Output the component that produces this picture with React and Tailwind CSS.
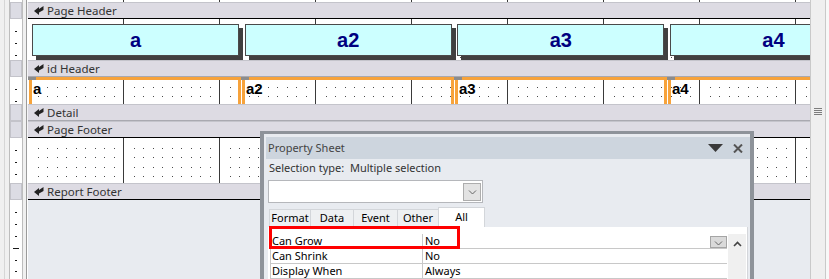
import React from "react";

const UI = "font-['Noto_Sans','Segoe_UI',sans-serif]";
const ARIAL = "font-['Liberation_Sans',Arial,sans-serif]";

const DOT_X = [10, 19, 29, 38, 48, 57, 67, 76, 86];
const DOT_Y = [10, 19, 29, 38, 48, 58, 67, 77, 86];

// dotted design grid with a solid line every inch (96px)
function GridFill({ id }) {
  return (
    <svg className="absolute inset-0 h-full w-full" aria-hidden="true">
      <defs>
        <pattern id={id} width="96" height="96" patternUnits="userSpaceOnUse">
          {DOT_X.map((x) =>
            DOT_Y.map((y) => (
              <rect key={x + "-" + y} x={x} y={y} width="1" height="1" fill="#4a4a4a" />
            ))
          )}
          <rect x="95" y="0" width="1" height="96" fill="#3a3a3a" />
        </pattern>
      </defs>
      <rect width="100%" height="100%" fill={`url(#${id})`} />
    </svg>
  );
}

function Ticks({ count }) {
  return (
    <svg className="h-full w-full" aria-hidden="true">
      {Array.from({ length: count }, (_, i) => {
        const k = i + 1;
        const long = k % 4 === 0;
        return (
          <rect
            key={k}
            x={long ? 3 : 5}
            y={Math.round(11.9 * k)}
            width={long ? 6 : 2}
            height="1"
            fill="#1a1a1a"
          />
        );
      })}
    </svg>
  );
}

function Gutter({ bar, ticks = 0 }) {
  return (
    <div className="flex h-full w-[28px] shrink-0">
      <div className="w-[4px] bg-[#f0f0f0]" />
      <div className="w-[1px] bg-[#d6d6d6]" />
      <div className="w-[4px] bg-[#f0f0f0]" />
      <div className="w-[1px] bg-[#bdbdbd]" />
      {bar ? (
        <div className="w-[12px] border border-[#c3c3ca] bg-[#dcdce4]" />
      ) : (
        <div className="w-[12px] bg-white">
          <Ticks count={ticks} />
        </div>
      )}
      <div className="w-[1px] bg-[#bdbdbd]" />
      <div className="w-[3px] bg-[#f0f0f0]" />
      <div className="w-[1px] bg-[#9b9b9b]" />
      <div className={`w-[1px] ${bar ? "bg-[#f4f4f6]" : "bg-white"}`} />
    </div>
  );
}

function BarIcon() {
  return (
    <svg width="10" height="9" viewBox="0 0 10 9" aria-hidden="true">
      <path d="M0 5 L5 1 L5 3 L9.5 0 L9.5 4 L5 6.5 L5 9 Z" fill="#222" />
    </svg>
  );
}

function SectionBar({ label, line = "border-b-[#a9a9b0]" }) {
  return (
    <div className="flex h-[17px] shrink-0">
      <Gutter bar />
      <div
        className={`flex flex-1 items-center gap-[3px] border-y border-t-[#c4c4cb] bg-[#dddbe3] pl-[6px] text-[11.5px] text-[#333] ${line}`}
      >
        <BarIcon />
        <span className="leading-none">{label}</span>
      </div>
    </div>
  );
}

function Body({ id, h, ticks, children }) {
  return (
    <div className={`flex shrink-0 ${h}`}>
      <Gutter ticks={ticks} />
      <div className="relative flex-1 overflow-hidden bg-white">
        <GridFill id={id} />
        <div className="relative h-full">{children}</div>
      </div>
    </div>
  );
}

const labels = ["a", "a2", "a3", "a4"];

function Chevron({ up, className }) {
  return (
    <svg width="9" height="6" viewBox="0 0 9 6" className={className} aria-hidden="true">
      <path
        d={up ? "M1 5 L4.5 1.5 L8 5" : "M1 1.5 L4.5 5 L8 1.5"}
        fill="none"
        stroke={up ? "#444" : "#666"}
        strokeWidth={up ? 1.6 : 1}
      />
    </svg>
  );
}

const tabs = [
  ["Format", "w-[41px]"],
  ["Data", "w-[43px]"],
  ["Event", "w-[44px]"],
  ["Other", "w-[41px]"],
];

const props = [
  ["Can Grow", "No", true],
  ["Can Shrink", "No"],
  ["Display When", "Always"],
];

function PropertySheet() {
  return (
    <div
      className={`absolute left-[260px] top-[131px] h-[160px] w-[494px] border-x-[4px] border-t-[3px] border-[#8e939a] bg-[#e8ebf0] pt-[3px] ${UI}`}
    >
      <div className="ml-[2px] flex h-[22px] items-center bg-[#cdd5de] pl-[2px] pr-[7px] text-[11px] text-[#444]">
        <span className="flex-1">Property Sheet</span>
        <svg width="15" height="8" viewBox="0 0 15 8" aria-hidden="true">
          <path d="M0 0 H15 L7.5 8 Z" fill="#3a3a3a" />
        </svg>
        <svg width="10" height="9" viewBox="0 0 10 9" className="ml-[10px]" aria-hidden="true">
          <path d="M1 0.5 L9 8.5 M9 0.5 L1 8.5" stroke="#555" strokeWidth="2" />
        </svg>
      </div>
      <div className="pl-[4px] pr-[3px]">
        <div className="h-[18px] pl-[1px] text-[11px] leading-[18px] text-[#333]">
          Selection type:&nbsp; Multiple selection
        </div>
        <div className="mt-[3px] flex h-[23px] w-[215px] items-center justify-end border border-[#b5b7bb] bg-white pr-[1px]">
          <div className="flex h-[18px] w-[18px] items-center justify-center border border-[#adadad] bg-[#e3e3e3]">
            <Chevron />
          </div>
        </div>
        <div className="mt-[1px] flex h-[23px] items-end pl-[1px] text-[11px] text-black">
          {tabs.map(([t, w]) => (
            <div
              key={t}
              className={`flex h-[18px] items-center justify-center border-l border-t border-[#d3d6da] bg-[#eef0f2] ${w}`}
            >
              {t}
            </div>
          ))}
          <div className="flex h-[20px] w-[47px] items-center justify-center border-x border-t border-[#d3d6da] bg-white">
            All
          </div>
        </div>
        <div className="flex h-[60px] w-[480px] border-r border-[#d4d6da] bg-white pt-[7px]">
          <div className="ml-[2px] w-[457px] text-[11px] text-black">
            {props.map(([k, v, drop]) => (
              <div key={k} className="flex h-[15px] border-b border-l border-[#c8c8c8]">
                <div className="w-[151px] pl-[1px] leading-[14px]">{k}</div>
                <div className="flex flex-1 border-l border-[#c8c8c8] pl-[2px] leading-[14px]">
                  <span className="flex-1">{v}</span>
                  {drop && (
                    <div className="mt-[2px] flex h-[12px] w-[17px] items-end justify-center border border-[#a5a5a5] bg-[#dadada]">
                      <Chevron className="mb-[1px]" />
                    </div>
                  )}
                </div>
              </div>
            ))}
          </div>
          <div className="ml-[1px] flex w-[18px] justify-center bg-[#f0f0f0] pt-[7px]">
            <Chevron up />
          </div>
        </div>
      </div>
      <div className="absolute left-[5px] top-[92px] h-[23px] w-[191px] border-[3px] border-[#f00]" />
    </div>
  );
}

export default function App() {
  return (
    <div className={`relative flex h-[279px] w-[829px] overflow-hidden bg-[#e8ebf0] ${UI}`}>
      <div className="flex w-[810px] flex-col">
        <Body id="g0" h="h-[2px]" ticks={0} />
        <SectionBar label="Page Header" line="border-b-black" />
        <Body id="g1" h="h-[41px]" ticks={3}>
          <div className="flex gap-[5.67px] pl-[4px] pt-[5px]">
            {labels.map((l) => (
              <div
                key={l}
                className={`flex h-[32px] w-[207px] shrink-0 items-center justify-center border border-[#4a4a4a] bg-[#ccffff] text-[20px] font-bold text-[#000080] shadow-[4px_4px_0_#404040] ${ARIAL}`}
              >
                {l}
              </div>
            ))}
          </div>
        </Body>
        <SectionBar label="id Header" />
        <Body id="g2" h="h-[27px]" ticks={2}>
          <div className="flex h-full gap-[1px] pl-[1px]">
            {labels.map((l) => (
              <div
                key={l}
                className="relative h-full w-[212px] shrink-0 border-x-[3px] border-t-[3px] border-[#f7a33b]"
              >
                <div className="absolute -left-[4px] -top-[3px] h-[3px] w-[8px] bg-[#8c8c8c]" />
                <span className={`block pl-[1px] text-[15px] font-bold leading-[17px] text-black ${ARIAL}`}>
                  {l}
                </span>
              </div>
            ))}
          </div>
        </Body>
        <SectionBar label="Detail" />
        <SectionBar label="Page Footer" line="border-b-black" />
        <Body id="g3" h="h-[45px]" ticks={3} />
        <SectionBar label="Report Footer" line="border-b-black" />
        <div className="flex flex-1">
          <Gutter ticks={6} />
          <div className="flex-1 bg-[#e8ebf0]" />
        </div>
      </div>
      <div className="flex w-[19px]">
        <div className="flex w-[16px] flex-col items-center border-x border-[#c9c9c9] bg-[#efefef] pt-[108px]">
          <div className="flex w-[8px] flex-col gap-[1px]">
            <div className="h-[1px] bg-[#7d7d7d]" />
            <div className="h-[1px] bg-[#7d7d7d]" />
            <div className="h-[1px] bg-[#7d7d7d]" />
            <div className="h-[1px] bg-[#7d7d7d]" />
          </div>
        </div>
        <div className="w-[3px] bg-[#f8f8f8]" />
      </div>
      <PropertySheet />
    </div>
  );
}
